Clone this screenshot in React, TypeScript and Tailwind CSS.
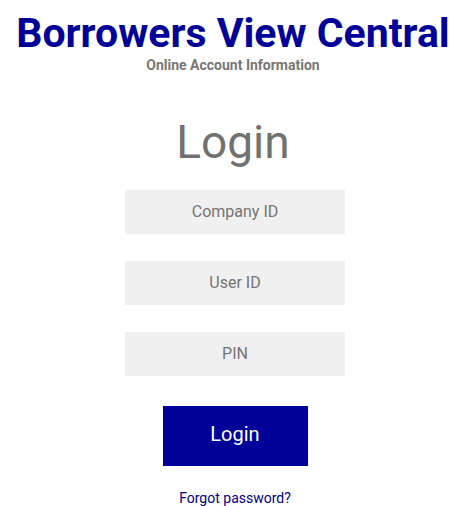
import { useState } from 'react'

const FIELDS = [
  { id: 'company', placeholder: 'Company ID', type: 'text' },
  { id: 'user', placeholder: 'User ID', type: 'text' },
  { id: 'pin', placeholder: 'PIN', type: 'password' },
]

export default function App() {
  const [values, setValues] = useState<Record<string, string>>({})

  return (
    <div className="flex min-h-screen flex-col items-center bg-white font-['Roboto',sans-serif]">
      {/* Header */}
      <div className="ml-[3px] flex flex-col items-center">
        <h1 className="pt-[13px] text-[41px] font-bold leading-none text-[#000099]">Borrowers View Central</h1>
        <p className="mt-[4px] text-[14px] font-bold leading-none text-[#777777]">Online Account Information</p>

        <h2 className="mt-[47px] text-[46px] leading-none text-[#717171]">Login</h2>
      </div>

      {/* Form */}
      <form className="ml-[7px] mt-[25px] flex flex-col items-center" onSubmit={(e) => e.preventDefault()}>
        <div className="flex flex-col gap-[27px]">
          {FIELDS.map((f) => (
            <input
              key={f.id}
              type={f.type}
              placeholder={f.placeholder}
              value={values[f.id] ?? ''}
              onChange={(e) => setValues({ ...values, [f.id]: e.target.value })}
              className="h-[44px] w-[220px] bg-[#f0f0f0] pb-[2px] text-center text-base text-[#555] outline-none placeholder:text-[#757575]"
            />
          ))}
        </div>

        <button
          type="submit"
          className="mt-[30px] h-[60px] w-[145px] bg-[#000099] pb-[4px] text-[20px] text-white"
        >
          Login
        </button>

        <a href="#" className="mt-[25px] text-sm leading-none text-[#000080]">
          Forgot password?
        </a>
      </form>
    </div>
  )
}
